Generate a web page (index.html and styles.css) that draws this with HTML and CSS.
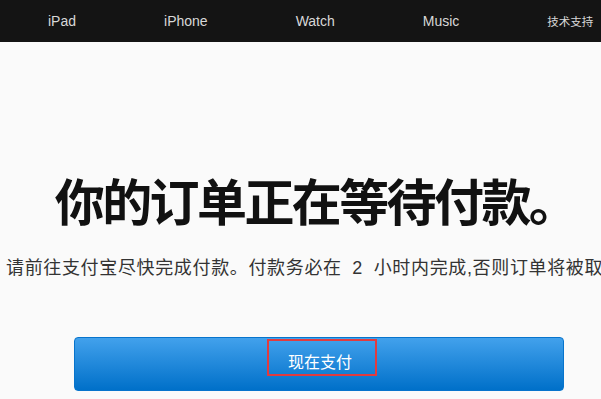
FILE: index.html
```html
<!DOCTYPE html>
<html lang="zh-CN">
<head>
    <meta charset="UTF-8">
    <meta name="viewport" content="width=device-width, initial-scale=1.0">
    <title>订单付款</title>
    <link rel="stylesheet" href="styles.css">
</head>
<body>
    <nav class="globalnav">
        <a href="#" class="nav-item">iPad</a>
        <a href="#" class="nav-item">iPhone</a>
        <a href="#" class="nav-item">Watch</a>
        <a href="#" class="nav-item">Music</a>
        <a href="#" class="nav-item nav-cjk">技术支持</a>
    </nav>
    <main class="pending">
        <h1 class="pending-title">你的订单正在等待付款。</h1>
        <p class="pending-text">请前往支付宝尽快完成付款。付款务必在 <span class="hours">2</span> 小时内完成,否则订单将被取消。</p>
        <button type="button" class="pay-btn"><span class="pay-label">现在支付</span></button>
    </main>
</body>
</html>
```

FILE: styles.css
```css
* {
    margin: 0;
    padding: 0;
    box-sizing: border-box;
}
body {
    font-family: 'Liberation Sans', 'Noto Sans CJK SC', Arial, sans-serif;
    background-color: #FAFAFA;
    color: #111111;
    overflow: hidden;
}
.globalnav {
    display: flex;
    align-items: center;
    gap: 88px;
    height: 42px;
    padding-left: 48px;
    background-color: #141414;
}
.nav-item {
    color: #D8D8D8;
    font-size: 14px;
    text-decoration: none;
    white-space: nowrap;
}
.nav-cjk {
    font-size: 11.5px;
}
.pending {
    display: flex;
    flex-direction: column;
}
.pending-title {
    margin-top: 134px;
    padding-left: 30px;
    text-align: center;
    font-size: 50px;
    line-height: 56px;
    font-weight: 700;
    letter-spacing: -2.6px;
    white-space: nowrap;
}
.pending-text {
    margin-top: 24px;
    padding-left: 6px;
    font-size: 18px;
    line-height: 24px;
    letter-spacing: 0.65px;
    color: #333333;
    white-space: nowrap;
    overflow: hidden;
}
.hours {
    margin: 0 5px;
}
.pay-btn {
    width: 490px;
    height: 54px;
    margin: 57px 0 0 74px;
    border: 1px solid #0774CC;
    border-radius: 4px;
    background: linear-gradient(#42A1EC, #0070C9);
    color: #FFFFFF;
    font-family: inherit;
    font-size: 16px;
    display: flex;
    justify-content: center;
    align-items: flex-start;
    padding-top: 1px;
}
.pay-label {
    display: inline-block;
    margin-left: 6px;
    border: 2px solid #E23B3F;
    padding: 12px 23px 1px 19px;
    line-height: 20px;
}
```
